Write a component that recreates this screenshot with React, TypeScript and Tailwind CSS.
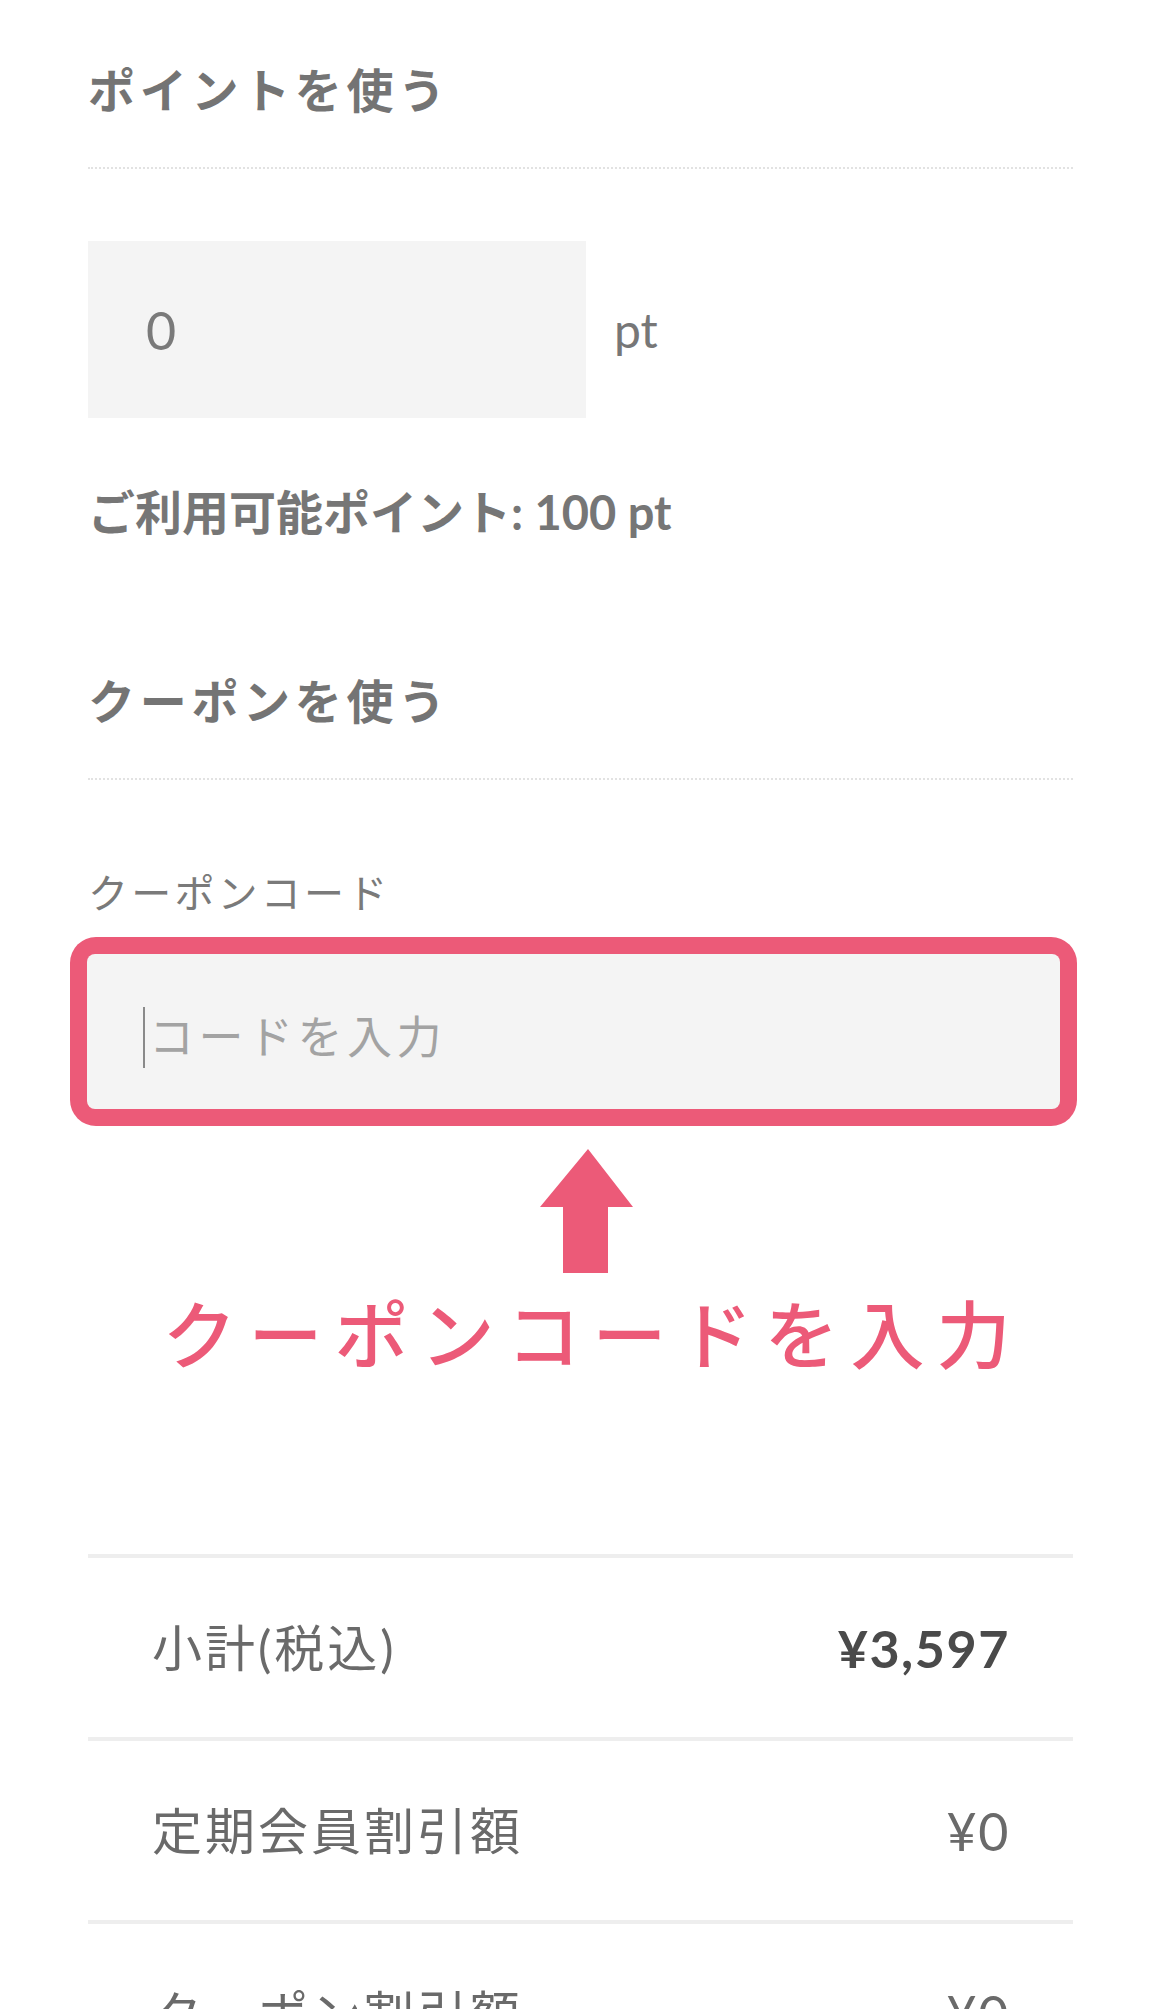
const font = "font-['Lato','Noto_Sans_CJK_JP',sans-serif]";

function SectionTitle({ children }: { children: string }) {
  return (
    <div className="border-b-2 border-dotted border-[#e2e2e2] pb-[42px]">
      <h2 className="text-[47px] leading-[70px] font-bold tracking-[0.1em] text-[#747474]">{children}</h2>
    </div>
  );
}

function UpArrow() {
  return (
    <svg width="93" height="124" viewBox="0 0 93 124" className="block">
      <path d="M48 0 L93 58 L68 58 L68 124 L23 124 L23 58 L0 58 Z" fill="#ec5a78" />
    </svg>
  );
}

function SummaryRow({ label, amount, strong }: { label: string; amount: string; strong?: boolean }) {
  return (
    <div className="flex h-[183px] items-center justify-between border-b-4 border-[#eeeeee] pl-[64px] pr-[63px]">
      <span className="text-[50px] leading-[60px] tracking-[0.06em] text-[#6a6a6a]">{label}</span>
      <span
        className={
          strong
            ? 'text-[52px] leading-[60px] font-bold tracking-[0.03em] text-[#4a4a4a]'
            : 'text-[52px] leading-[60px] tracking-[0.03em] text-[#6a6a6a]'
        }
      >
        {amount}
      </span>
    </div>
  );
}

export default function App() {
  return (
    <div className={`${font} min-h-[2009px] w-[1170px] overflow-hidden bg-white`}>
      <div className="pl-[88px] pr-[97px] pt-[55px]">
        <SectionTitle>ポイントを使う</SectionTitle>

        <div className="mt-[72px] flex items-center">
          <div className="flex h-[177px] w-[498px] items-center bg-[#f4f4f4] pl-[58px]">
            <span className="text-[52px] leading-none text-[#7a7a7a]">0</span>
          </div>
          <span className="ml-[28px] text-[48px] leading-none text-[#777777]">pt</span>
        </div>

        <p className="mt-[64px] text-[47px] leading-[60px] font-bold text-[#767676]">ご利用可能ポイント: 100 pt</p>

        <div className="mt-[124px]">
          <SectionTitle>クーポンを使う</SectionTitle>
        </div>

        <label className="mt-[88px] block text-[40px] leading-[50px] tracking-[0.08em] text-[#7a7a7a]">クーポンコード</label>

        <div className="mt-[19px] -ml-[18px] w-[1007px] rounded-[26px] bg-[#ec5a78] p-[17px]">
          <div className="flex h-[155px] items-center rounded-[8px] bg-[#f4f4f4] pl-[56px] pt-[12px]">
            <span className="h-[61px] w-[2px] bg-[#8a8a8a]" />
            <span className="ml-[4px] text-[45px] leading-none tracking-[0.1em] text-[#a3a3a3]">コードを入力</span>
          </div>
        </div>

        <div className="flex flex-col items-center pl-[12px]">
          <div className="mt-[23px]">
            <UpArrow />
          </div>
          <p className="mt-[17px] pl-[12px] text-[74px] leading-[90px] font-medium tracking-[12px] text-[#ec5a78]">
            クーポンコードを入力
          </p>
        </div>

        <div className="mt-[174px] border-t-4 border-[#eeeeee]">
          <SummaryRow label="小計(税込)" amount="¥3,597" strong />
          <SummaryRow label="定期会員割引額" amount="¥0" />
          <SummaryRow label="クーポン割引額" amount="¥0" />
        </div>
      </div>
    </div>
  );
}
